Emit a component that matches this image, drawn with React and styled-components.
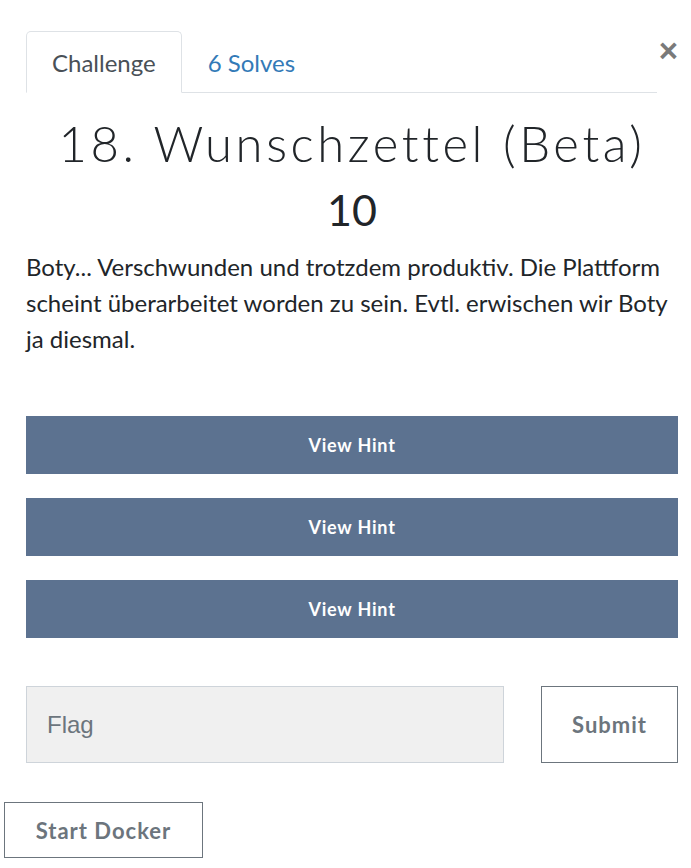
import React from "react";
import styled, { createGlobalStyle } from "styled-components";

const Global = createGlobalStyle`
  html, body { margin: 0; padding: 0; background: #fff; }
  body { font-family: "Lato", "Noto Sans", sans-serif; color: #212529; }
  * { box-sizing: border-box; }
`;

const Modal = styled.div`
  width: 691px;
  padding: 31px 13px 0 26px;
  position: relative;
`;

const Close = styled.button`
  position: absolute;
  top: 34px;
  right: 13px;
  border: none;
  background: none;
  padding: 0;
  font-family: "Liberation Sans", Arial, sans-serif;
  font-size: 33px;
  font-weight: 700;
  line-height: 1;
  color: #7a7a7a;
  cursor: pointer;
`;

const Tabs = styled.nav`
  display: flex;
  width: 631px;
  border-bottom: 1px solid #dee2e6;
`;

const Tab = styled.div`
  padding: 0 25px;
  height: 62px;
  display: flex;
  align-items: center;
  font-size: 24px;
  margin-bottom: -1px;
  border: 1px solid ${(p) => (p.$active ? "#dee2e6" : "transparent")};
  border-bottom-color: ${(p) => (p.$active ? "#fff" : "transparent")};
  border-radius: 5px 5px 0 0;
  background: ${(p) => (p.$active ? "#fff" : "transparent")};
  color: ${(p) => (p.$active ? "#495057" : "#337ab7")};
`;

const Body = styled.div``;

const Title = styled.h2`
  margin: 20px 0 0;
  text-align: center;
  font-family: "Lato", sans-serif;
  font-weight: 300;
  font-size: 49px;
  letter-spacing: 3.6px;
  line-height: 60px;
  color: #212529;
`;

const Points = styled.h3`
  margin: 11px 0 0;
  text-align: center;
  font-weight: 400;
  font-size: 43px;
  line-height: 52px;
  color: #212529;
`;

const Desc = styled.p`
  margin: 13px 0 0;
  font-size: 24px;
  line-height: 36px;
  color: #212529;
`;

const Hints = styled.div`
  margin-top: 59px;
  display: flex;
  flex-direction: column;
  gap: 24px;
`;

const HintButton = styled.button`
  width: 652px;
  height: 58px;
  border: none;
  border-radius: 0;
  background: #5c7290;
  color: #fff;
  font-family: "Lato", sans-serif;
  font-size: 18px;
  font-weight: 700;
  letter-spacing: 0.8px;
  cursor: pointer;
`;

const FlagRow = styled.div`
  margin-top: 48px;
  display: flex;
  align-items: stretch;
  gap: 37px;
  width: 652px;
`;

const FlagInput = styled.input`
  width: 478px;
  height: 77px;
  background: #f0f0f0;
  border: 1px solid #ced4da;
  border-radius: 0;
  padding: 0 20px;
  font-family: "Liberation Sans", Arial, sans-serif;
  font-size: 24px;
  color: #495057;
  outline: none;
  &::placeholder { color: #6c757d; }
`;

const OutlineButton = styled.button`
  background: #fff;
  border: 1px solid #6c757d;
  border-radius: 0;
  color: #6c757d;
  font-family: "Lato", sans-serif;
  font-weight: 700;
  font-size: 22px;
  letter-spacing: 1px;
  cursor: pointer;
  width: ${(p) => p.$w}px;
  height: ${(p) => p.$h}px;
`;

const DockerRow = styled.div`
  margin: 39px 0 0 -22px;
`;

export default function App() {
  return (
    <>
      <Global />
      <Modal>
        <Close aria-label="Close">×</Close>
        <Tabs>
          <Tab $active>Challenge</Tab>
          <Tab>6 Solves</Tab>
        </Tabs>
        <Body>
          <Title>18. Wunschzettel (Beta)</Title>
          <Points>10</Points>
          <Desc>
            Boty... Verschwunden und trotzdem produktiv. Die Plattform scheint überarbeitet worden zu sein. Evtl. erwischen wir Boty ja diesmal.
          </Desc>
          <Hints>
            <HintButton>View Hint</HintButton>
            <HintButton>View Hint</HintButton>
            <HintButton>View Hint</HintButton>
          </Hints>
          <FlagRow>
            <FlagInput placeholder="Flag" />
            <OutlineButton $w={137} $h={77}>Submit</OutlineButton>
          </FlagRow>
          <DockerRow>
            <OutlineButton $w={199} $h={56}>Start Docker</OutlineButton>
          </DockerRow>
        </Body>
      </Modal>
    </>
  );
}
